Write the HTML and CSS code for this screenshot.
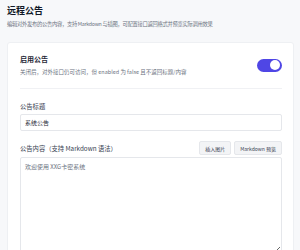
FILE: index.html
```html
<!DOCTYPE html>
<html lang="zh-CN">
<head>
    <meta charset="UTF-8">
    <meta name="viewport" content="width=device-width, initial-scale=1.0">
    <title>远程公告</title>
    <link rel="stylesheet" href="styles.css">
</head>
<body>
    <h1>远程公告</h1>
    <p class="subtitle">编辑对外发布的公告内容，支持 Markdown 与插图，可配置接口返回格式并预览实际调用效果</p>

    <div class="card">
        <div class="toggle-row">
            <div>
                <div class="toggle-title">启用公告</div>
                <div class="toggle-desc">关闭后，对外接口仍可访问，但 enabled 为 false 且不返回标题/内容</div>
            </div>
            <label class="switch">
                <input type="checkbox" checked>
                <span class="slider"></span>
            </label>
        </div>

        <div class="field">
            <label class="field-label" for="title">公告标题</label>
            <input type="text" id="title" class="text-input" value="系统公告">
        </div>

        <div class="field">
            <div class="field-head">
                <label class="field-label" for="content">公告内容（支持 Markdown 语法）</label>
                <div class="actions">
                    <button class="btn">插入图片</button>
                    <button class="btn">Markdown 预览</button>
                </div>
            </div>
            <textarea id="content" class="text-area">欢迎使用 XXG卡密系统</textarea>
        </div>
    </div>
</body>
</html>
```

FILE: styles.css
```css
body {
    margin: 0;
    padding: 5px 6px 0 7px;
    background: #f7f8fa;
    font-family: "Noto Sans CJK SC", "Noto Sans", sans-serif;
    color: #1f2937;
}
h1 {
    margin: 0;
    font-size: 9px;
    line-height: 12px;
    font-weight: 700;
    color: #111827;
}
.subtitle {
    margin: 3px 0 14px;
    font-size: 5.3px;
    letter-spacing: -0.3px;
    line-height: 8px;
    color: #6b7280;
}
.card {
    background: white;
    border: 1px solid #eef0f3;
    border-radius: 3px;
    padding: 11px 11px 0 12px;
    height: 220px;
    box-sizing: border-box;
}
.toggle-row {
    display: flex;
    align-items: center;
    justify-content: space-between;
    padding-bottom: 12px;
    border-bottom: 1px solid #f0f1f4;
}
.toggle-title {
    font-size: 7px;
    line-height: 10px;
    font-weight: 700;
    color: #1f2937;
}
.toggle-desc {
    margin-top: 4px;
    font-size: 5.5px;
    line-height: 8px;
    color: #6b7280;
}
.switch {
    position: relative;
    width: 25px;
    height: 13px;
    display: inline-block;
}
.switch input {
    display: none;
}
.slider {
    position: absolute;
    inset: 0;
    background: #4f46e5;
    border-radius: 7px;
}
.slider::after {
    content: "";
    position: absolute;
    top: 1.5px;
    right: 2px;
    width: 10px;
    height: 10px;
    border-radius: 50%;
    background: white;
}
.field {
    margin-top: 13px;
}
.field + .field {
    margin-top: 10px;
}
.field-label {
    display: block;
    font-size: 6.3px;
    line-height: 9px;
    color: #374151;
}
.text-input {
    display: block;
    box-sizing: border-box;
    width: 100%;
    height: 17px;
    margin-top: 3px;
    padding: 0 4px;
    border: 1px solid #e5e7eb;
    border-radius: 2px;
    font-family: inherit;
    font-size: 6px;
    color: #1f2937;
    outline: none;
}
.field-head {
    display: flex;
    align-items: center;
    justify-content: space-between;
}
.actions {
    display: flex;
    gap: 3px;
}
.btn {
    height: 14px;
    padding: 0 5px;
    background: #f3f4f6;
    border: 1px solid #e5e7eb;
    border-radius: 2px;
    font-family: inherit;
    font-size: 5px;
    color: #374151;
    cursor: pointer;
}
.text-area {
    display: block;
    box-sizing: border-box;
    width: 100%;
    height: 99px;
    margin-top: 2px;
    padding: 4px;
    border: 1px solid #e5e7eb;
    border-radius: 2px;
    font-family: inherit;
    font-size: 6px;
    line-height: 9px;
    color: #6b7280;
    outline: none;
}
```
